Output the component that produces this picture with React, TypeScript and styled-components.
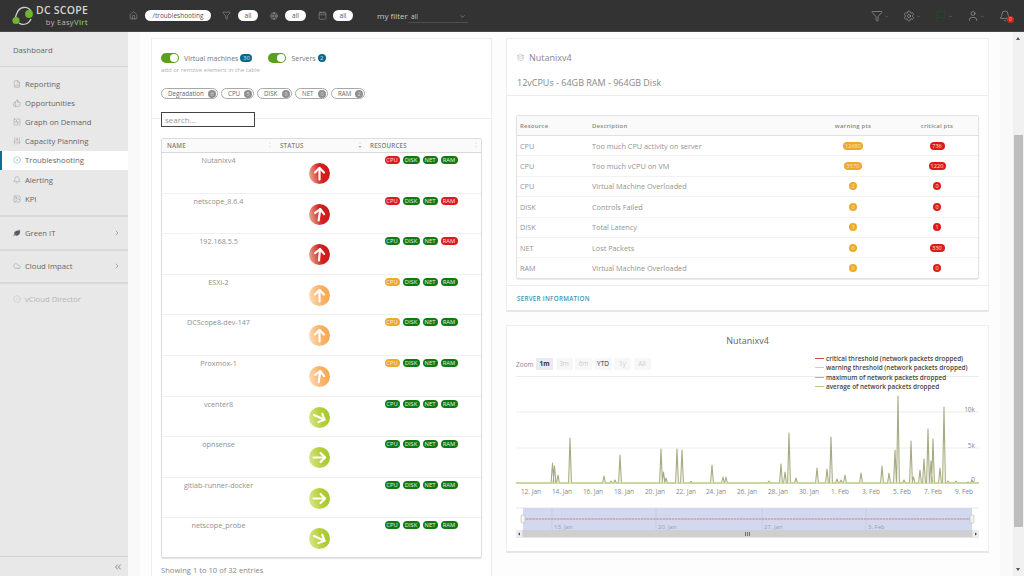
import React from "react";
import styled, { createGlobalStyle } from "styled-components";
import {
  Home, Filter, Globe, Calendar, ChevronDown, Settings, Flag, User, Bell, FileChartColumn, ThumbsUp,
  SquareActivity, SlidersVertical, CircleDot, Image, Leaf, Cloud, CircleCheck, ChevronRight, ChevronsLeft, Database,
} from "lucide-react";

const Global = createGlobalStyle`
  html, body { margin: 0; padding: 0; background: #f9f9f9; }
  * { box-sizing: border-box; }
  body { font-family: "Open Sans", "Liberation Sans", sans-serif; }
`;

const Page = styled.div`
  width: 1024px; height: 576px; overflow: hidden; display: flex; flex-direction: column;
`;
const Header = styled.header`
  height: 32px; flex: none; background: #333333; display: flex; align-items: center; position: relative;
  border-bottom: 1px solid #4a4a4a;
`;
const Brand = styled.div`
  width: 128px; padding-left: 12px; display: flex; align-items: center; gap: 2px; flex: none;
`;
const BrandText = styled.div`
  display: flex; flex-direction: column; align-items: flex-end;
`;
const BrandName = styled.span`
  color: #d5d5d5; font-size: 10.5px; font-weight: 600; line-height: 14px; letter-spacing: 0.25px;
`;
const BrandBy = styled.span`
  color: #b8b8b8; font-size: 7.5px; line-height: 11px; letter-spacing: 0.3px;
  b { color: #7cc142; font-weight: 600; }
`;
const Crumbs = styled.div`
  display: flex; align-items: center; margin-left: 1px; color: #a9a9a9;
`;
const Pill = styled.span<{ $w: number; $ml: number }>`
  width: ${(p) => p.$w}px; margin-left: ${(p) => p.$ml}px; height: 11px; border-radius: 6px; background: #fff;
  color: #555; font-size: 6.5px; line-height: 11px; text-align: center; flex: none;
`;
const CrumbIcon = styled.span<{ $ml: number }>`
  display: flex; margin-left: ${(p) => p.$ml}px; color: #a9a9a9;
`;
const MyFilter = styled.span`
  margin-left: 24px; color: #c8c8c8; font-size: 8px; width: 31px;
`;
const FilterSelect = styled.div`
  width: 60px; height: 12px; border-bottom: 1px solid #4e4e4e; display: flex; align-items: center; justify-content: space-between;
  padding: 0 2px 0 3px; color: #ccc; font-size: 6.5px; margin-top: 2px;
`;
const Tools = styled.div`
  margin-left: auto; display: flex; align-items: center; padding-right: 9px;
`;
const Tool = styled.span<{ $color?: string; $w: number }>`
  width: ${(p) => p.$w}px; display: flex; align-items: center; gap: 1px; color: ${(p) => p.$color || "#aaa"};
  position: relative;
`;
const Caret = styled(ChevronDown)`
  color: #888; margin-top: 1px;
`;
const BellBadge = styled.span`
  position: absolute; left: 8px; top: 6px; width: 7px; height: 7px; border-radius: 50%; background: #c92a1f;
  color: #f3c0b8; font-size: 5px; line-height: 7px; text-align: center;
`;

const Body = styled.div`
  flex: 1; min-height: 0; display: flex;
`;
const Sidebar = styled.nav`
  width: 128px; flex: none; background: #e8e8e8; display: flex; flex-direction: column; color: #666;
  font-size: 7.7px;
`;
const SideTop = styled.div`
  height: 35px; padding: 10px 0 0 13px; line-height: 17px; border-bottom: 1px solid #d6d6d6;
`;
const SideGroup = styled.div<{ $first?: boolean; $last?: boolean }>`
  padding: ${(p) => (p.$first ? 7 : 6)}px 0;
  border-bottom: ${(p) => (p.$last ? "0" : "2px solid #d9d9d9")};
`;
const SideItem = styled.div<{ $active?: boolean; $muted?: boolean }>`
  height: 19.2px; display: flex; align-items: center; gap: 4px; padding-left: 13px; padding-right: 7px;
  color: ${(p) => (p.$muted ? "#b5b5b5" : "#666")};
  background: ${(p) => (p.$active ? "#fff" : "transparent")};
  box-shadow: ${(p) => (p.$active ? "inset 2px 0 0 #0a6f9c" : "none")};
  svg { flex: none; color: ${(p) => (p.$active ? "#3d9fbf" : p.$muted ? "#bbb" : "#888")}; }
`;
const SideGrow = styled.span`
  flex: 1;
`;
const SideSpacer = styled.div`
  flex: 1;
`;
const SideFoot = styled.div`
  height: 20px; border-top: 1px solid #d2d2d2; display: flex; align-items: center; justify-content: flex-end;
  padding-right: 5px; color: #666;
`;

const Main = styled.main`
  flex: 1; min-width: 0; overflow: hidden; padding: 0 13px 0 12px;
`;
const Content = styled.div`
  height: 100%; background: #fdfdfd; padding: 6px 11px 0; display: flex; gap: 14px; align-items: flex-start;
`;
const LeftCard = styled.section`
  width: 341px; flex: none; background: #fff; border: 1px solid #eee;
`;
const RightCol = styled.div`
  width: 483px; flex: none; display: flex; flex-direction: column; gap: 13px;
`;
const Card = styled.section`
  background: #fff; border: 1px solid #eee; border-bottom: 2px solid #e6e6e6;
`;
const FilterBlock = styled.div`
  height: 80px; padding: 14px 9px 0; border-bottom: 1px solid #ececec;
`;
const ToggleRow = styled.div`
  display: flex; align-items: center; height: 10px; color: #777; font-size: 7px;
`;
const Toggle = styled.span<{ $ml?: number }>`
  width: 18px; height: 10px; border-radius: 5px; background: #5c9e20; margin-left: ${(p) => p.$ml || 0}px; margin-right: 5px;
  position: relative; flex: none;
  &::after { content: ""; position: absolute; right: 1px; top: 1px; width: 8px; height: 8px; border-radius: 50%; background: #fff; }
`;
const CountBadge = styled.span<{ $w: number }>`
  width: ${(p) => p.$w}px; height: 8px; border-radius: 4px; margin-left: 2px; background: #0b668c; color: #cfe3ec;
  font-size: 6px; line-height: 8px; text-align: center; flex: none;
`;
const Hint = styled.div`
  color: #b0b0b0; font-size: 6px; margin-top: 3px; line-height: 9px;
`;
const Chips = styled.div`
  display: flex; gap: 3px; margin-top: 13px;
`;
const Chip = styled.span<{ $w: number }>`
  width: ${(p) => p.$w}px; height: 11px; border: 1px solid #a8a8a8; border-radius: 6px; display: flex; align-items: center;
  justify-content: space-between; padding: 0 1px 0 6px; color: #666; font-size: 6.2px; flex: none;
`;
const ChipCount = styled.span`
  width: 8px; height: 8px; border-radius: 50%; background: #8f8f8f; color: #ddd; font-size: 5.5px; line-height: 8px; text-align: center;
`;
const SearchBox = styled.input`
  display: block; width: 94px; height: 15px; margin: -7px 0 0 9px; position: relative; background: #fff;
  border: 1px solid #444; padding: 0 3px; font: 8px "Open Sans", sans-serif; color: #777; outline: none;
  &::placeholder { color: #999; opacity: 1; }
`;
const TableWrap = styled.div`
  margin: 11px 9px 0; height: 420px; border: 1px solid #ddd; border-radius: 2px; box-shadow: 0 1px 1px #e4e4e4;
`;
const ServerHead = styled.div`
  height: 14px; display: grid; grid-template-columns: 113px 90px 1fr; border-bottom: 1px solid #d8d8d8;
  background: #fafafa; color: #808080; font-size: 6.2px; font-weight: 600; letter-spacing: 0.2px; line-height: 13px;
`;
const HeadCell = styled.span<{ $down?: boolean }>`
  padding-left: 5px; position: relative;
  &::before {
    content: ""; position: absolute; right: 4px; top: 3px; width: 0; height: 0;
    border-left: 1.5px solid transparent; border-right: 1.5px solid transparent; border-bottom: 2.5px solid #e2e2e2;
  }
  &::after {
    content: ""; position: absolute; right: 4px; top: 7px; width: 0; height: 0;
    border-left: 1.5px solid transparent; border-right: 1.5px solid transparent;
    border-top: 2.5px solid ${(p) => (p.$down ? "#888" : "#e2e2e2")};
  }
`;
const ServerRow = styled.div`
  height: 40.6px; display: grid; grid-template-columns: 113px 90px 1fr; border-bottom: 1px solid #f0f0f0;
  &:last-child { border-bottom: 0; }
`;
const NameCell = styled.div`
  text-align: center; color: #909090; font-size: 7.2px; line-height: 12px; padding-top: 1px;
`;
const StatusCell = styled.div`
  display: flex; justify-content: center; padding: 10px 2px 0 0;
`;
const ResCell = styled.div`
  display: flex; justify-content: center; gap: 3px; padding-top: 3px; padding-right: 4px;
`;
const ResBadge = styled.span<{ $c: string; $w: number }>`
  width: ${(p) => p.$w}px; height: 8px; border-radius: 4px; flex: none; text-align: center; color: #e9e9e9; font-size: 5.8px; line-height: 8px;
  background: ${(p) => p.$c};
`;
const Showing = styled.div`
  margin: 6px 9px 0; color: #888; font-size: 7.6px; height: 14px; line-height: 12px;
`;

const ServerTitle = styled.div`
  height: 57px; padding: 11px 10px 0; border-bottom: 1px solid #ececec; color: #7c7c7c; font-size: 9px;
`;
const TitleLine = styled.div`
  display: flex; align-items: center; gap: 5px; height: 14px; color: #888;
  svg { color: #999; }
`;
const SpecLine = styled.div`
  margin-top: 12px; font-size: 9px; height: 13px; line-height: 13px; color: #888;
`;
const DetailWrap = styled.div`
  padding: 19px 9px 6px; border-bottom: 1px solid #ececec;
`;
const DetailTable = styled.div`
  border: 1px solid #e2e2e2; border-radius: 2px; box-shadow: 0 1px 1px #e8e8e8;
`;
const DetailHead = styled.div`
  height: 20px; display: grid; grid-template-columns: 72px 221px 86px 1fr; align-items: center; border-bottom: 1px solid #e0e0e0;
  background: #fafafa; color: #888; font-size: 6px; font-weight: 600; letter-spacing: 0.2px;
`;
const DetailRow = styled.div`
  height: 20.4px; display: grid; grid-template-columns: 72px 221px 86px 1fr; align-items: center; border-bottom: 1px solid #f2f2f2;
  color: #939393; font-size: 7.3px;
  &:last-child { border-bottom: 0; height: 20px; }
`;
const Cell = styled.span<{ $center?: boolean }>`
  padding-left: ${(p) => (p.$center ? 0 : 3)}px; display: flex; justify-content: ${(p) => (p.$center ? "center" : "flex-start")};
`;
const Pts = styled.span<{ $c: string; $w: number }>`
  min-width: 8px; width: ${(p) => p.$w}px; height: 8px; border-radius: 4px; background: ${(p) => p.$c}; color: #f5e3c0;
  font-size: 5.6px; line-height: 8px; text-align: center;
`;
const ServerLink = styled.div`
  height: 24px; padding-left: 10px; display: flex; align-items: center; color: #3e93b5; font-size: 6.2px; font-weight: 600; letter-spacing: 0.3px;
`;
const ChartCard = styled(Card)`
  height: 228px; padding: 8px 9px 0; position: relative;
`;
const ChartTitle = styled.div`
  height: 14px; text-align: center; color: #666; font-size: 9px; line-height: 14px; font-weight: 500;
`;
const RangeRow = styled.div`
  margin-top: 10px; height: 12px; display: flex; align-items: center; color: #888; font-size: 6.5px;
`;
const RangeLabel = styled.span`
  width: 20px;
`;
const RangeBtn = styled.span<{ $state: "on" | "off" | "plain" }>`
  width: 17px; height: 12px; margin-right: 2.5px; border-radius: 1px; text-align: center; line-height: 12px; font-size: 6.5px; flex: none;
  font-weight: ${(p) => (p.$state === "on" ? 700 : 500)};
  background: ${(p) => (p.$state === "on" ? "#e6ebf5" : "#f7f7f7")};
  color: ${(p) => (p.$state === "off" ? "#ccc" : "#333")};
`;
const Legend = styled.div`
  position: absolute; left: 308px; top: 27px; display: flex; flex-direction: column; color: #444; font-size: 6.4px; font-weight: 600;
`;
const LegendRow = styled.div`
  height: 9.6px; display: flex; align-items: center; gap: 2px; white-space: nowrap;
`;
const LegendKey = styled.span<{ $c: string }>`
  width: 9px; height: 1px; background: ${(p) => p.$c}; flex: none;
`;
const ChartSvg = styled.svg`
  display: block; margin-top: 2px;
`;
const Scrollbar = styled.div`
  width: 11px; flex: none; background: #f1f1f1; position: relative; padding-top: 103px;
  &::before { content: ""; position: absolute; left: 3px; top: 5px; border: 2.5px solid transparent; border-top: 0; border-bottom: 3px solid #555; }
  &::after { content: ""; position: absolute; left: 3px; bottom: 5px; border: 2.5px solid transparent; border-bottom: 0; border-top: 3px solid #555; }
`;
const ScrollThumb = styled.div`
  height: 392px; margin: 0 1px; background: #bdbdbd;
`;

const GREEN = "#0f7a12";
const RED = "#dd1b1b";
const ORANGE = "#efa92a";

type Row = { name: string; kind: "red" | "orange" | "green"; rot: number; res: string[] };
const rows: Row[] = [
  { name: "Nutanixv4", kind: "red", rot: 0, res: [RED, GREEN, GREEN, GREEN] },
  { name: "netscope_8.6.4", kind: "red", rot: 8, res: [RED, GREEN, GREEN, RED] },
  { name: "192.168.5.5", kind: "red", rot: 5, res: [GREEN, GREEN, GREEN, RED] },
  { name: "ESXi-2", kind: "orange", rot: 0, res: [ORANGE, GREEN, GREEN, GREEN] },
  { name: "DCScope8-dev-147", kind: "orange", rot: 0, res: [ORANGE, GREEN, GREEN, GREEN] },
  { name: "Proxmox-1", kind: "orange", rot: 8, res: [ORANGE, GREEN, GREEN, GREEN] },
  { name: "vcenter8", kind: "green", rot: 115, res: [GREEN, GREEN, GREEN, GREEN] },
  { name: "opnsense", kind: "green", rot: 90, res: [GREEN, GREEN, GREEN, GREEN] },
  { name: "gitlab-runner-docker", kind: "green", rot: 90, res: [GREEN, GREEN, GREEN, GREEN] },
  { name: "netscope_probe", kind: "green", rot: 115, res: [GREEN, GREEN, GREEN, GREEN] },
];
const resNames = ["CPU", "DISK", "NET", "RAM"];
const resW = [15, 17, 15, 17];

const grads = {
  red: ["#e8a890", "#d42020", "#c91a1a"],
  orange: ["#fbdcb8", "#f9b36a", "#f6a852"],
  green: ["#dbe58a", "#b5d03c", "#a3c72e"],
};

function StatusArrow({ kind, rot, id }: { kind: Row["kind"]; rot: number; id: string }) {
  const g = grads[kind];
  return (
    <svg width="21" height="21" viewBox="0 0 21 21">
      <defs>
        <linearGradient id={id} x1="0" y1="0.6" x2="1" y2="0.4">
          <stop offset="0" stopColor={g[0]} />
          <stop offset="0.55" stopColor={g[1]} />
          <stop offset="1" stopColor={g[2]} />
        </linearGradient>
      </defs>
      <circle cx="10.5" cy="10.5" r="10.5" fill={`url(#${id})`} />
      <g transform={`rotate(${rot} 10.5 10.5)`} fill="none" stroke="#fff" strokeWidth="2.2" strokeLinecap="round" strokeLinejoin="round">
        <path d="M10.5 16.5V5" />
        <path d="M6 9.5 10.5 5 15 9.5" />
      </g>
    </svg>
  );
}

function Logo() {
  return (
    <svg width="22" height="20" viewBox="0 0 22 20">
      <path d="M19 5C15 -1 7 1 5 7 3.5 10 3 13 4 15M7 17C11 20 17 18 19 13" fill="none" stroke="#cfcfcf" strokeWidth="1.3" />
      <circle cx="4" cy="14.5" r="3.6" fill="#6fb52f" />
      <circle cx="17" cy="8" r="3.9" fill="#6fb52f" />
    </svg>
  );
}

const details: [string, string, string, number, string, number][] = [
  ["CPU", "Too much CPU activity on server", "12680", 20, "736", 15],
  ["CPU", "Too much vCPU on VM", "5570", 18, "1220", 17],
  ["CPU", "Virtual Machine Overloaded", "2", 8, "0", 8],
  ["DISK", "Controls Failed", "0", 8, "0", 8],
  ["DISK", "Total Latency", "3", 8, "1", 8],
  ["NET", "Lost Packets", "6", 8, "330", 15],
  ["RAM", "Virtual Machine Overloaded", "0", 8, "0", 8],
];

// x (page px), height above the baseline (px)
const spikes: [number, number][] = [
  [552.5, 20], [554.5, 17], [558, 8], [570, 45], [604, 7], [611, 2], [615, 3], [620, 28], [661, 34], [663.5, 11], [666, 5],
  [677, 34], [682, 33], [691, 1.5], [712, 18], [723, 6], [726, 6], [769, 2], [781, 19], [785, 11], [789, 50], [796, 5],
  [817, 15], [827, 14], [831, 46], [837, 4], [841, 3], [845, 8], [861, 10], [882, 17], [889, 10], [895, 33], [898, 87],
  [904, 3], [911, 42], [913.5, 6], [920, 13], [924, 24], [928, 54], [931, 22], [933, 44], [940, 15], [944, 76], [948, 2], [956, 2], [968, 1], [972, 3],
];
const OX = 516;
const OY = 372;
const base = 483 - OY;
const spikePath =
  `M0 ${base}` +
  spikes.map(([x, h]) => ` L${x - OX - 1.4} ${base} L${x - OX} ${base - h} L${x - OX + 1.4} ${base}`).join("") +
  ` L463 ${base}`;
const xLabels: [number, string][] = [
  [531, "12. Jan"], [562, "14. Jan"], [593, "16. Jan"], [624, "18. Jan"], [655, "20. Jan"], [686, "22. Jan"], [716, "24. Jan"],
  [747, "26. Jan"], [778, "28. Jan"], [809, "30. Jan"], [840, "1. Feb"], [871, "3. Feb"], [902, "5. Feb"], [933, "7. Feb"], [964, "9. Feb"],
];
const navLabels: [number, string][] = [[552, "13. Jan"], [656, "20. Jan"], [762, "27. Jan"], [866, "3. Feb"]];

function Chart() {
  return (
    <ChartSvg width="463" height="168" viewBox="0 0 463 168" fontFamily="Open Sans, sans-serif">
      {[4.5, 40, 76].map((y) => (
        <line key={y} x1="0" x2="463" y1={y} y2={y} stroke="#ececec" strokeWidth="1" />
      ))}
      <text x="459" y="40" textAnchor="end" fontSize="6.5" fill="#888">10k</text>
      <text x="459" y="76" textAnchor="end" fontSize="6.5" fill="#888">5k</text>
      <text x="459" y="110" textAnchor="end" fontSize="6.5" fill="#888">0</text>
      <path d={spikePath} fill="none" stroke="#a7ab80" strokeWidth="1.1" strokeLinejoin="round" />
      <line x1="0" x2="463" y1={base + 0.2} y2={base + 0.2} stroke="#c6d98d" strokeWidth="1.2" />
      {xLabels.map(([x, t]) => (
        <text key={t} x={x - OX} y="122" textAnchor="middle" fontSize="6.5" fill="#888">{t}</text>
      ))}
      <line x1="0" x2="463" y1="136" y2="136" stroke="#e6e6e6" />
      <rect x="7" y="136" width="449" height="22" fill="#d2d9ee" />
      {navLabels.map(([x, t]) => (
        <g key={t}>
          <line x1={x - OX} x2={x - OX} y1="136" y2="158" stroke="#bfc6dc" strokeWidth="0.5" />
          <text x={x - OX + 2} y="157" fontSize="6" fill="#9a9fb5">{t}</text>
        </g>
      ))}
      <line x1="7" x2="456" y1="147" y2="147" stroke="#d9667a" strokeWidth="0.8" strokeDasharray="2.5 0.6" />
      <rect x="5" y="143" width="4" height="8" rx="1" fill="#f3f3f3" stroke="#aaa" strokeWidth="0.5" />
      <rect x="454" y="143" width="4" height="8" rx="1" fill="#f3f3f3" stroke="#aaa" strokeWidth="0.5" />
      <rect x="0" y="158" width="463" height="7.5" fill="#cfcfcf" />
      <rect x="0" y="158" width="6.5" height="7.5" fill="#ececec" />
      <rect x="456.5" y="158" width="6.5" height="7.5" fill="#ececec" />
      <path d="M2 162 4 160.5V163.5Z M461 162 459 160.5V163.5Z" fill="#444" />
      <path d="M229.5 160V164M231.5 160V164M233.5 160V164" stroke="#555" strokeWidth="0.8" />
    </ChartSvg>
  );
}

export default function App() {
  return (
    <Page>
      <Global />
      <Header>
        <Brand>
          <Logo />
          <BrandText>
            <BrandName>DC SCOPE</BrandName>
            <BrandBy>by Easy<b>Virt</b></BrandBy>
          </BrandText>
        </Brand>
        <Crumbs>
          <CrumbIcon $ml={0}><Home size={9} strokeWidth={1.3} /></CrumbIcon>
          <Pill $w={66} $ml={7}>/troubleshooting</Pill>
          <CrumbIcon $ml={11}><Filter size={9} strokeWidth={1.3} /></CrumbIcon>
          <Pill $w={20} $ml={7}>all</Pill>
          <CrumbIcon $ml={12}><Globe size={8} strokeWidth={1.6} /></CrumbIcon>
          <Pill $w={21} $ml={7}>all</Pill>
          <CrumbIcon $ml={12}><Calendar size={9} strokeWidth={1.2} /></CrumbIcon>
          <Pill $w={20} $ml={6}>all</Pill>
          <MyFilter>my filter</MyFilter>
          <FilterSelect>all<ChevronDown size={7} color="#999" /></FilterSelect>
        </Crumbs>
        <Tools>
          <Tool $w={32}><Filter size={12} strokeWidth={1.2} /><Caret size={5} /></Tool>
          <Tool $w={32}><Settings size={12} strokeWidth={1.2} /><Caret size={5} /></Tool>
          <Tool $w={32} $color="#1c5a1c"><Flag size={12} strokeWidth={1.2} /><Caret size={5} /></Tool>
          <Tool $w={32}><User size={12} strokeWidth={1.2} /><Caret size={5} /></Tool>
          <Tool $w={16}><Bell size={12} strokeWidth={1.2} /><BellBadge>0</BellBadge></Tool>
        </Tools>
      </Header>
      <Body>
        <Sidebar>
          <SideTop>Dashboard</SideTop>
          <SideGroup $first>
            <SideItem><FileChartColumn size={8} strokeWidth={1.2} />Reporting</SideItem>
            <SideItem><ThumbsUp size={8} strokeWidth={1.2} />Opportunities</SideItem>
            <SideItem><SquareActivity size={8} strokeWidth={1.2} />Graph on Demand</SideItem>
            <SideItem><SlidersVertical size={8} strokeWidth={1.2} />Capacity Planning</SideItem>
            <SideItem $active><CircleDot size={8} strokeWidth={1.2} />Troubleshooting</SideItem>
            <SideItem><Bell size={8} strokeWidth={1.2} />Alerting</SideItem>
            <SideItem><Image size={8} strokeWidth={1.2} />KPI</SideItem>
          </SideGroup>
          <SideGroup>
            <SideItem><Leaf size={8} strokeWidth={1.2} fill="#555" />Green IT<SideGrow /><ChevronRight size={8} /></SideItem>
          </SideGroup>
          <SideGroup>
            <SideItem><Cloud size={8} strokeWidth={1.2} />Cloud Impact<SideGrow /><ChevronRight size={8} /></SideItem>
          </SideGroup>
          <SideGroup $last>
            <SideItem $muted><CircleCheck size={8} strokeWidth={1.2} />vCloud Director</SideItem>
          </SideGroup>
          <SideSpacer />
          <SideFoot><ChevronsLeft size={10} strokeWidth={1.8} /></SideFoot>
        </Sidebar>
        <Main>
          <Content>
            <LeftCard>
              <FilterBlock>
                <ToggleRow>
                  <Toggle />Virtual machines<CountBadge $w={12}>30</CountBadge>
                  <Toggle $ml={16} />Servers<CountBadge $w={8}>2</CountBadge>
                </ToggleRow>
                <Hint>add or remove element in the table</Hint>
                <Chips>
                  <Chip $w={57}>Degradation<ChipCount>6</ChipCount></Chip>
                  <Chip $w={33}>CPU<ChipCount>5</ChipCount></Chip>
                  <Chip $w={35}>DISK<ChipCount>0</ChipCount></Chip>
                  <Chip $w={33}>NET<ChipCount>0</ChipCount></Chip>
                  <Chip $w={34}>RAM<ChipCount>2</ChipCount></Chip>
                </Chips>
              </FilterBlock>
              <SearchBox placeholder="search..." readOnly />
              <TableWrap>
                <ServerHead>
                  <HeadCell>NAME</HeadCell>
                  <HeadCell $down>STATUS</HeadCell>
                  <HeadCell>RESOURCES</HeadCell>
                </ServerHead>
                {rows.map((r, i) => (
                  <ServerRow key={r.name}>
                    <NameCell>{r.name}</NameCell>
                    <StatusCell><StatusArrow kind={r.kind} rot={r.rot} id={`st${i}`} /></StatusCell>
                    <ResCell>
                      {r.res.map((c, j) => (
                        <ResBadge key={j} $c={c} $w={resW[j]}>{resNames[j]}</ResBadge>
                      ))}
                    </ResCell>
                  </ServerRow>
                ))}
              </TableWrap>
              <Showing>Showing 1 to 10 of 32 entries</Showing>
            </LeftCard>
            <RightCol>
              <Card>
                <ServerTitle>
                  <TitleLine><Database size={7} strokeWidth={1.3} />Nutanixv4</TitleLine>
                  <SpecLine>12vCPUs - 64GB RAM - 964GB Disk</SpecLine>
                </ServerTitle>
                <DetailWrap>
                  <DetailTable>
                    <DetailHead>
                      <Cell>Resource</Cell>
                      <Cell>Description</Cell>
                      <Cell $center>warning pts</Cell>
                      <Cell $center>critical pts</Cell>
                    </DetailHead>
                    {details.map((d, i) => (
                      <DetailRow key={i}>
                        <Cell>{d[0]}</Cell>
                        <Cell>{d[1]}</Cell>
                        <Cell $center><Pts $c={ORANGE} $w={d[3]}>{d[2]}</Pts></Cell>
                        <Cell $center><Pts $c={RED} $w={d[5]}>{d[4]}</Pts></Cell>
                      </DetailRow>
                    ))}
                  </DetailTable>
                </DetailWrap>
                <ServerLink>SERVER INFORMATION</ServerLink>
              </Card>
              <ChartCard>
                <ChartTitle>Nutanixv4</ChartTitle>
                <RangeRow>
                  <RangeLabel>Zoom</RangeLabel>
                  <RangeBtn $state="on">1m</RangeBtn>
                  <RangeBtn $state="off">3m</RangeBtn>
                  <RangeBtn $state="off">6m</RangeBtn>
                  <RangeBtn $state="plain">YTD</RangeBtn>
                  <RangeBtn $state="off">1y</RangeBtn>
                  <RangeBtn $state="off">All</RangeBtn>
                </RangeRow>
                <Chart />
                <Legend>
                  <LegendRow><LegendKey $c="#cf4b4b" />critical threshold (network packets dropped)</LegendRow>
                  <LegendRow><LegendKey $c="#e9d34b" />warning threshold (network packets dropped)</LegendRow>
                  <LegendRow><LegendKey $c="#b4b4a4" />maximum of network packets dropped</LegendRow>
                  <LegendRow><LegendKey $c="#b6c77a" />average of network packets dropped</LegendRow>
                </Legend>
              </ChartCard>
            </RightCol>
          </Content>
        </Main>
        <Scrollbar><ScrollThumb /></Scrollbar>
      </Body>
    </Page>
  );
}
